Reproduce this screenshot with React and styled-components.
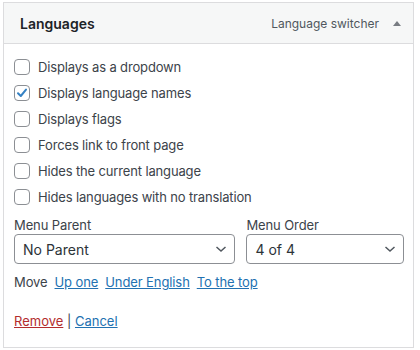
import styled, { createGlobalStyle } from "styled-components";
import { useState } from "react";

const GlobalStyle = createGlobalStyle`
  html, body {
    margin: 0;
    padding: 0;
    background: #fff;
  }
  body {
    font-family: Inter, "Liberation Sans", sans-serif;
    color: #3c434a;
  }
`;

const Page = styled.div`
  padding: 2px 6px 0 3px;
`;

const Panel = styled.div`
  border: 1px solid #dcdcde;
  background: #fff;
`;

const Header = styled.div`
  display: flex;
  align-items: center;
  height: 40px;
  padding: 0 12px 0 16px;
  background: #f6f7f7;
  border-bottom: 1px solid #dcdcde;
`;

const Title = styled.h3`
  flex: 1;
  margin: 0;
  font-size: 14px;
  font-weight: 600;
  color: #1d2327;
`;

const Subtitle = styled.span`
  font-size: 12px;
  color: #50575e;
`;

const Toggle = styled.span`
  margin-left: 14px;
  width: 0;
  height: 0;
  border-left: 4px solid transparent;
  border-right: 4px solid transparent;
  border-bottom: 5px solid #787c82;
`;

const Body = styled.div`
  padding: 15px 9px 17px 10px;
`;

const Options = styled.div`
  display: flex;
  flex-direction: column;
  gap: 10px;
`;

const Row = styled.label`
  display: flex;
  align-items: center;
  gap: 8px;
  height: 16px;
  font-size: 13px;
  letter-spacing: -0.15px;
  color: #3c434a;
  cursor: pointer;
`;

const Box = styled.span`
  display: flex;
  align-items: center;
  justify-content: center;
  width: 14px;
  height: 14px;
  border: 1px solid #8c8f94;
  border-radius: 4px;
  background: #fff;
  flex-shrink: 0;
`;

const Fields = styled.div`
  display: flex;
  gap: 11px;
  margin-top: 11px;
`;

const Field = styled.div`
  display: flex;
  flex-direction: column;
  width: ${({ w }) => w};
`;

const FieldLabel = styled.span`
  font-size: 13px;
  line-height: 18px;
  letter-spacing: -0.1px;
  color: #3c434a;
`;

const SelectWrap = styled.div`
  position: relative;
  height: 30px;
`;

const Select = styled.select`
  appearance: none;
  width: 100%;
  height: 30px;
  margin: 0;
  padding: 0 24px 0 8px;
  border: 1px solid #8c8f94;
  border-radius: 4px;
  background: #fff;
  font-family: inherit;
  font-size: 14px;
  color: #2c3338;
`;

const Chevron = styled.svg`
  position: absolute;
  right: 8px;
  top: 10px;
  pointer-events: none;
`;

const MoveRow = styled.div`
  display: flex;
  gap: 7px;
  margin-top: 9px;
  font-size: 13px;
  line-height: 18px;
  letter-spacing: -0.1px;
`;

const Link = styled.a`
  color: ${({ danger }) => (danger ? "#b32d2e" : "#2271b1")};
  text-decoration: underline;
  cursor: pointer;
`;

const Actions = styled.div`
  margin-top: 21px;
  font-size: 13px;
  line-height: 18px;
  color: #3c434a;
`;

const options = [
  { label: "Displays as a dropdown", checked: false },
  { label: "Displays language names", checked: true },
  { label: "Displays flags", checked: false },
  { label: "Forces link to front page", checked: false },
  { label: "Hides the current language", checked: false },
  { label: "Hides languages with no translation", checked: false },
];

function Checkbox({ label, checked, onToggle }) {
  return (
    <Row onClick={onToggle}>
      <Box>
        {checked && (
          <svg width="14" height="14" viewBox="0 0 14 14">
            <path d="M3 7.2 L5.8 10 L11 3.6" fill="none" stroke="#3582c4" strokeWidth="2" strokeLinecap="round" strokeLinejoin="round" />
          </svg>
        )}
      </Box>
      {label}
    </Row>
  );
}

function Dropdown({ value, items }) {
  return (
    <SelectWrap>
      <Select defaultValue={value}>
        {items.map((i) => (
          <option key={i}>{i}</option>
        ))}
      </Select>
      <Chevron width="12" height="10" viewBox="0 0 12 10">
        <path d="M1.5 3 L6 7 L10.5 3" fill="none" stroke="#50575e" strokeWidth="1.5" />
      </Chevron>
    </SelectWrap>
  );
}

export default function App() {
  const [checks, setChecks] = useState(options.map((o) => o.checked));

  const toggle = (i) => {
    setChecks(checks.map((c, j) => (j === i ? !c : c)));
  };

  return (
    <Page>
      <GlobalStyle />
      <Panel>
        <Header>
          <Title>Languages</Title>
          <Subtitle>Language switcher</Subtitle>
          <Toggle />
        </Header>
        <Body>
          <Options>
            {options.map((o, i) => (
              <Checkbox key={o.label} label={o.label} checked={checks[i]} onToggle={() => toggle(i)} />
            ))}
          </Options>
          <Fields>
            <Field w="222px">
              <FieldLabel>Menu Parent</FieldLabel>
              <Dropdown value="No Parent" items={["No Parent", "English"]} />
            </Field>
            <Field w="158px">
              <FieldLabel>Menu Order</FieldLabel>
              <Dropdown value="4 of 4" items={["1 of 4", "2 of 4", "3 of 4", "4 of 4"]} />
            </Field>
          </Fields>
          <MoveRow>
            Move
            <Link>Up one</Link>
            <Link>Under English</Link>
            <Link>To the top</Link>
          </MoveRow>
          <Actions>
            <Link danger>Remove</Link> | <Link>Cancel</Link>
          </Actions>
        </Body>
      </Panel>
    </Page>
  );
}
